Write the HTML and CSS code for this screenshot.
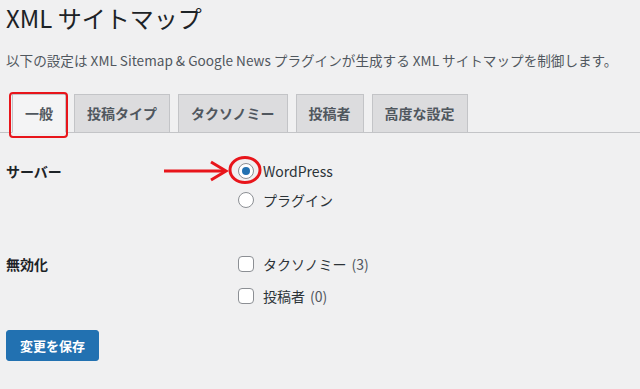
FILE: index.html
```html
<!DOCTYPE html>
<html lang="ja">
<head>
  <meta charset="UTF-8" />
  <meta name="viewport" content="width=device-width, initial-scale=1.0"/>
  <title>XML サイトマップ</title>
  <link rel="stylesheet" href="styles.css">
</head>
<body>

  <h1 class="page-title">XML サイトマップ</h1>
  <p class="page-desc">以下の設定は XML Sitemap &amp; Google News プラグインが生成する XML サイトマップを制御します。</p>

  <nav class="tabs">
    <a class="tab tab-active">一般</a>
    <a class="tab">投稿タイプ</a>
    <a class="tab">タクソノミー</a>
    <a class="tab">投稿者</a>
    <a class="tab">高度な設定</a>
  </nav>

  <form class="settings">
    <div class="row row-server">
      <div class="row-label">サーバー</div>
      <div class="row-field">
        <label class="option">
          <span class="mark-wrap">
            <input type="radio" name="server" checked />
            <svg class="annot" width="110" height="34" viewBox="0 0 110 34">
              <path d="M3 17 H64" stroke="#e8151b" stroke-width="3" fill="none"/>
              <path d="M50 8 L65 17 L50 26" stroke="#e8151b" stroke-width="3" fill="none"/>
              <ellipse cx="84" cy="16" rx="15" ry="12.5" stroke="#e8151b" stroke-width="3" fill="none"/>
            </svg>
          </span>
          WordPress
        </label>
        <label class="option">
          <input type="radio" name="server" />
          プラグイン
        </label>
      </div>
    </div>

    <div class="row row-disable">
      <div class="row-label">無効化</div>
      <div class="row-field">
        <label class="option option-check">
          <input type="checkbox" />
          タクソノミー <span class="count">(3)</span>
        </label>
        <label class="option option-check">
          <input type="checkbox" />
          投稿者 <span class="count">(0)</span>
        </label>
      </div>
    </div>

    <button type="button" class="save">変更を保存</button>
  </form>

</body>
</html>
```

FILE: styles.css
```css
body {
  font-family: "Noto Sans CJK JP", "Noto Sans", sans-serif;
  background: #f0f0f1;
  color: #1d2327;
  margin: 0;
  padding: 0 6px;
}
.page-title {
  font-size: 24px;
  font-weight: 400;
  line-height: 32px;
  margin: 2px 0 0;
}
.page-desc {
  font-size: 13.6px;
  line-height: 20px;
  color: #50575e;
  margin: 16px 0 0;
  white-space: nowrap;
}
.tabs {
  display: flex;
  gap: 8px;
  margin: 24px -6px 0;
  padding-left: 12px;
  border-bottom: 1px solid #c3c4c7;
}
.tab {
  position: relative;
  font-size: 14px;
  font-weight: 700;
  line-height: 25px;
  padding: 6px 12px;
  color: #50575e;
  background: #dcdcde;
  border: 1px solid #c3c4c7;
  margin-bottom: -1px;
}
.tab-active {
  background: #f4f4f5;
  border-bottom-color: #f4f4f5;
}
/* red annotation box round the first tab */
.tab-active::after {
  content: "";
  position: absolute;
  left: -4px;
  right: -3px;
  top: -3px;
  bottom: -6px;
  border: 2px solid #e8151b;
  border-radius: 4px;
}
.settings {
  margin-top: 26px;
}
.row {
  display: flex;
}
.row-label {
  width: 232px;
  font-size: 14px;
  font-weight: 700;
  line-height: 24px;
}
.row-field {
  display: flex;
  flex-direction: column;
}
.row-server .option {
  height: 29px;
}
.row-disable {
  margin-top: 31px;
}
.row-disable .row-label {
  margin-top: 4px;
}
.option {
  display: flex;
  align-items: flex-start;
  gap: 9px;
  font-size: 14px;
  line-height: 24px;
  color: #2c3338;
}
.option-check {
  height: 32px;
  align-items: center;
}
.count {
  color: #50575e;
  margin-left: -4px;
}
.mark-wrap {
  position: relative;
  display: flex;
}
.annot {
  position: absolute;
  left: -77px;
  top: -5px;
  overflow: visible;
}
input[type="radio"] {
  appearance: none;
  width: 16px;
  height: 16px;
  margin: 4px 0 0 0;
  border: 1px solid #8c8f94;
  border-radius: 50%;
  background: #fff;
  display: grid;
  place-content: center;
}
input[type="radio"]:checked::before {
  content: "";
  width: 8px;
  height: 8px;
  border-radius: 50%;
  background: #2271b1;
}
input[type="checkbox"] {
  appearance: none;
  width: 16px;
  height: 16px;
  margin: 0;
  border: 1px solid #8c8f94;
  border-radius: 4px;
  background: #fff;
}
.save {
  display: block;
  height: 31px;
  margin-top: 18px;
  font-family: inherit;
  font-size: 13px;
  font-weight: 700;
  line-height: 20px;
  padding: 0 13px;
  color: #fff;
  background: #2271b1;
  border: 1px solid #2271b1;
  border-radius: 3px;
}
```
